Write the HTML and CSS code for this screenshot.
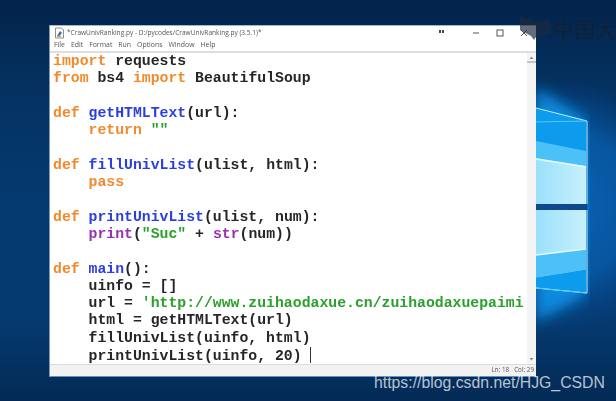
FILE: index.html
```html
<!DOCTYPE html>
<html lang="en">
<head>
<meta charset="utf-8">
<title>CrawUnivRanking.py</title>
<link rel="stylesheet" href="styles.css">
</head>
<body>
<div class="desktop">
  <svg class="wallpaper" width="616" height="401" viewBox="0 0 616 401" aria-hidden="true">
    <defs>
      <linearGradient id="bg" x1="0" y1="0" x2="0" y2="1">
        <stop offset="0" stop-color="#03234a"/>
        <stop offset="0.2" stop-color="#043160"/>
        <stop offset="0.5" stop-color="#053a70"/>
        <stop offset="0.8" stop-color="#053a70"/>
        <stop offset="1" stop-color="#032a55"/>
      </linearGradient>
      <radialGradient id="glow" cx="560" cy="205" r="125" gradientUnits="userSpaceOnUse">
        <stop offset="0" stop-color="#0a64b4"/>
        <stop offset="0.6" stop-color="#07559f"/>
        <stop offset="1" stop-color="#06488f" stop-opacity="0"/>
      </radialGradient>
      <linearGradient id="pane" x1="0" y1="0" x2="1" y2="0">
        <stop offset="0" stop-color="#9be0fb"/>
        <stop offset="1" stop-color="#c8f0fd"/>
      </linearGradient>
      <filter id="soft"><feGaussianBlur stdDeviation="0.7"/></filter>
      <filter id="softer"><feGaussianBlur stdDeviation="7"/></filter>
    </defs>
    <rect width="616" height="401" fill="url(#bg)"/>
    <rect x="430" y="70" width="186" height="280" fill="url(#glow)"/>
    <polygon points="536,88 585,118 585,296 536,322" fill="#0a8ade" filter="url(#softer)"/>
    <g filter="url(#soft)">
      <polygon points="536,108 586,121 586,204 536,204" fill="#0a9bee"/>
      <polygon points="536,141 586,151 586,204 536,204" fill="#4cc1f8"/>
      <polygon points="536,158 586,166 586,204 536,204" fill="url(#pane)"/>
      <rect x="536" y="204" width="51" height="6" fill="#0b4a8c"/>
      <polygon points="536,210 586,210 586,249 536,255" fill="url(#pane)"/>
      <polygon points="536,255 586,249 586,270 536,278" fill="#4cc1f8"/>
      <polygon points="536,278 586,270 586,293 536,288" fill="#0a9bee"/>
      <path d="M536,108 L587,121 L587,204 M587,210 L587,293 L536,288" fill="none" stroke="#bfeeff" stroke-width="1"/>
      <path d="M536,159 L586,167 M536,255 L586,249" stroke="#e6f9ff" stroke-width="1.5" fill="none"/>
      <path d="M536,122 L586,121 M536,288 L586,293" stroke="#58c8fa" stroke-width="1" fill="none"/>
    </g>
  </svg>

  <main class="window">
    <header class="titlebar">
      <svg class="app-icon" width="11" height="12" viewBox="0 0 11 12" aria-hidden="true">
        <path d="M1.5 1h6l2 2v8h-8z" fill="#fff" stroke="#8a8f96"/>
        <path d="M3 9l3-5 2 2-3 3.5z" fill="#3a6ea5"/>
        <path d="M3 9.5h4" stroke="#e0a92c" stroke-width="1.5"/>
      </svg>
      <span class="title">*CrawUnivRanking.py - D:/pycodes/CrawUnivRanking.py (3.5.1)*</span>
      <span class="title-dots"></span>
      <span class="win-controls">
        <svg width="8" height="8" viewBox="0 0 8 8" aria-hidden="true"><path d="M1 4h6" stroke="#555" stroke-width="1"/></svg>
        <svg width="8" height="8" viewBox="0 0 8 8" aria-hidden="true"><rect x="1" y="1" width="6" height="6" fill="none" stroke="#555"/></svg>
        <svg width="8" height="8" viewBox="0 0 8 8" aria-hidden="true"><path d="M1 1l6 6M7 1l-6 6" stroke="#555" stroke-width="1"/></svg>
      </span>
    </header>
    <nav class="menubar">
      <span>File</span><span>Edit</span><span>Format</span><span>Run</span><span>Options</span><span>Window</span><span>Help</span>
    </nav>
    <div class="editor">
      <pre class="code"><span class="kw">import</span> requests
<span class="kw">from</span> bs4 <span class="kw">import</span> BeautifulSoup

<span class="kw">def</span> <span class="fn">getHTMLText</span>(url):
    <span class="kw">return</span> <span class="str">""</span>

<span class="kw">def</span> <span class="fn">fillUnivList</span>(ulist, html):
    <span class="kw">pass</span>

<span class="kw">def</span> <span class="fn">printUnivList</span>(ulist, num):
    <span class="bi">print</span>(<span class="str">"Suc"</span> + <span class="bi">str</span>(num))

<span class="kw">def</span> <span class="fn">main</span>():
    uinfo = []
    url = <span class="str">'http://www.zuihaodaxue.cn/zuihaodaxuepaimi</span>
    html = getHTMLText(url)
    fillUnivList(uinfo, html)
    printUnivList(uinfo, 20) <span class="caret"></span></pre>
      <div class="scrollbar">
        <svg width="9" height="6" viewBox="0 0 9 6" aria-hidden="true"><path d="M4.5 1.5L6.5 4h-4z" fill="#8a8a8a"/></svg>
        <span class="thumb-line"></span>
        <svg class="arrow-down" width="9" height="6" viewBox="0 0 9 6" aria-hidden="true"><path d="M4.5 4.5L6.5 2h-4z" fill="#8a8a8a"/></svg>
      </div>
    </div>
    <footer class="statusbar"><span>Ln: 18</span><span>Col: 29</span></footer>
  </main>

  <div class="logo">
    <svg width="30" height="24" viewBox="0 0 30 24" aria-hidden="true">
      <path d="M0 0l16 6 14-2v14l-14 3-2 3-3-4L0 14z" fill="#1b2a3c" opacity="0.8"/>
    </svg>
    <span>中国大学</span>
  </div>
  <div class="watermark">https://blog.csdn.net/HJG_CSDN</div>
</div>
</body>
</html>
```

FILE: styles.css
```css
* { box-sizing: border-box; }
html, body { margin: 0; padding: 0; }
body { width: 616px; height: 401px; overflow: hidden; background: #04305f; }

.desktop { position: relative; width: 616px; height: 401px; overflow: hidden; }
.wallpaper { position: absolute; left: 0; top: 0; display: block; filter: blur(0.6px); }

.window {
  position: absolute;
  left: 49px;
  top: 25px;
  width: 487px;
  height: 352px;
  display: flex;
  flex-direction: column;
  background: #fff;
  border-top: 1px solid #9fb6cc;
  border-left: 1px solid #7f9ab5;
  border-bottom: 1px solid #5f93c8;
  filter: blur(0.5px);
}

.titlebar {
  flex: none;
  height: 14px;
  display: flex;
  align-items: center;
  padding-left: 4px;
  font: 6.55px/1 "Open Sans", sans-serif;
  color: #555;
}
.app-icon { margin-right: 2px; flex: none; }
.title { flex: 1; white-space: nowrap; }
.title-dots { width: 5px; height: 3px; margin: 0 28px 4px 0; border-left: 2px solid #444; border-right: 2px solid #444; }
.win-controls { display: flex; gap: 16px; margin-right: 8px; align-items: center; }
.win-controls svg { display: block; }

.menubar {
  flex: none;
  height: 13px;
  display: flex;
  align-items: center;
  gap: 6px;
  padding-left: 4px;
  font: 6.9px/1 "Open Sans", sans-serif;
  color: #555;
  border-bottom: 2px solid #dedede;
}

.editor { flex: 1; display: flex; min-height: 0; }
.code {
  flex: 1;
  margin: 0;
  padding: 0 0 0 3px;
  overflow: hidden;
  font: bold 14.8px/17.3px "Liberation Mono", monospace;
  color: #262626;
  white-space: pre;
}
.kw { color: #f28a2c; }
.fn { color: #2a3fe0; }
.str { color: #2ca02c; }
.bi { color: #9a30b0; }
.caret {
  display: inline-block;
  width: 1px;
  height: 16px;
  margin-left: -1px;
  background: #333;
  vertical-align: -3px;
}

.scrollbar {
  flex: none;
  width: 9px;
  display: flex;
  flex-direction: column;
  background: #f4f4f4;
}
.scrollbar svg { display: block; margin-top: 2px; }
.thumb-line { display: block; height: 2px; background: #c4c4c4; }
.scrollbar .arrow-down { margin-top: auto; margin-bottom: 2px; }

.statusbar {
  flex: none;
  height: 12px;
  display: flex;
  justify-content: flex-end;
  align-items: center;
  gap: 5px;
  padding-right: 2px;
  background: #f2f2f2;
  border-top: 1px solid #dcdcdc;
  font: 6.3px/1 "Open Sans", sans-serif;
  color: #555;
}

.logo {
  position: absolute;
  left: 520px;
  top: 16px;
  width: 96px;
  height: 24px;
  overflow: hidden;
  display: flex;
  align-items: center;
  gap: 3px;
  font: 21px/1 "Noto Sans CJK SC", sans-serif;
  color: #14202f;
  opacity: 0.85;
  white-space: nowrap;
  filter: blur(0.5px);
}
.logo svg { display: block; flex: none; }

.watermark {
  position: absolute;
  left: 374px;
  top: 373px;
  font: 15.8px/1.25 "Liberation Sans", sans-serif;
  color: rgba(255, 255, 255, 0.72);
  white-space: nowrap;
}
```
